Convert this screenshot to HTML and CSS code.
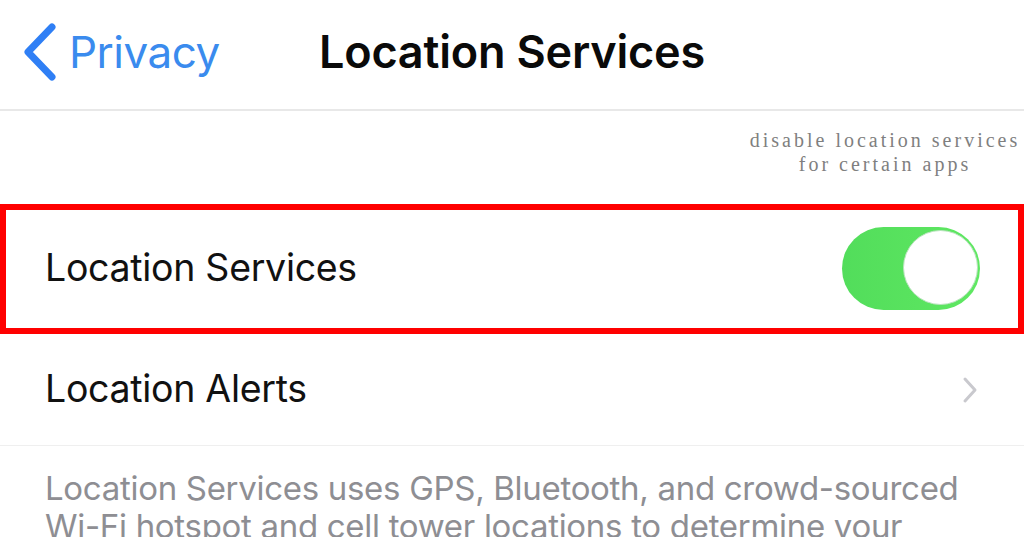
FILE: index.html
```html
<!DOCTYPE html>
<html lang="en">
<head>
<meta charset="utf-8">
<title>Location Services</title>
<link rel="stylesheet" href="styles.css">
</head>
<body>
<div class="screen">
  <header class="nav">
    <a class="back" href="#">
      <svg class="chev" width="36" height="58" viewBox="0 0 36 58"><path d="M30 4 L6 29 L30 54" fill="none" stroke="#2f7ff5" stroke-width="7" stroke-linecap="round" stroke-linejoin="round"/></svg>
      <span class="back-label">Privacy</span>
    </a>
    <h1 class="title">Location Services</h1>
    <div class="spacer"></div>
  </header>
  <div class="note">
    <p class="note-text">disable location services<br>for certain apps</p>
  </div>
  <div class="highlight">
    <div class="row">
      <span class="row-label">Location Services</span>
      <span class="toggle"><span class="knob"></span></span>
    </div>
  </div>
  <div class="row row-alerts">
    <span class="row-label">Location Alerts</span>
    <svg class="disclosure" width="16" height="28" viewBox="0 0 16 28"><path d="M3 3 L13 14 L3 25" fill="none" stroke="#c9c9ce" stroke-width="3" stroke-linecap="round" stroke-linejoin="round"/></svg>
  </div>
  <p class="footer">Location Services uses GPS, Bluetooth, and crowd-sourced Wi-Fi hotspot and cell tower locations to determine your approximate location.</p>
</div>
</body>
</html>
```
FILE: styles.css
```css
html, body {
  margin: 0;
  padding: 0;
  background: #ffffff;
}
.screen {
  width: 1024px;
  height: 537px;
  overflow: hidden;
  font-family: Inter, "Noto Sans", sans-serif;
}
.nav {
  height: 111px;
  box-sizing: border-box;
  border-bottom: 2px solid #e8e8e8;
  display: grid;
  grid-template-columns: 1fr auto 1fr;
  align-items: center;
}
.back {
  display: flex;
  align-items: center;
  text-decoration: none;
  padding-left: 22px;
  gap: 11px;
  margin-top: -6px;
}
.chev { display: block; }
.back-label {
  color: #3a8bee;
  font-size: 44px;
  font-weight: 400;
  letter-spacing: -0.5px;
}
.title {
  margin: -6px 0 0 0;
  font-size: 45px;
  font-weight: 600;
  color: #0a0a0a;
  letter-spacing: -0.2px;
}
.note {
  height: 93px;
  display: flex;
  justify-content: flex-end;
}
.note-text {
  margin: 17px 0 0 0;
  width: 278px;
  padding-right: 0;
  text-align: center;
  white-space: nowrap;
  font-family: "Liberation Serif", "DejaVu Serif", serif;
  font-size: 20px;
  line-height: 24px;
  letter-spacing: 3px;
  color: #7f7f7f;
}
.highlight {
  border: 6px solid #ff0000;
  height: 130px;
  box-sizing: border-box;
}
.row {
  height: 100%;
  display: flex;
  align-items: center;
  justify-content: space-between;
  padding: 0 38px 0 39px;
  box-sizing: border-box;
}
.row-label {
  font-size: 37.5px;
  color: #111111;
  letter-spacing: -0.3px;
  margin-top: -3px;
}
.toggle {
  width: 138px;
  height: 83px;
  border-radius: 42px;
  background: linear-gradient(90deg, #52dd5b, #5fe862);
  position: relative;
  margin-top: -2px;
}
.knob {
  position: absolute;
  right: 2px;
  top: 3px;
  width: 75px;
  height: 75px;
  border-radius: 50%;
  background: #ffffff;
  border: 1px solid #b9e3bd;
  box-sizing: border-box;
}
.row-alerts {
  height: 112px;
  border-bottom: 1px solid #efefef;
  padding-left: 45px;
  padding-right: 46px;
}
.disclosure { display: block; }
.footer {
  margin: 0;
  padding: 23px 40px 0 45px;
  font-size: 33px;
  line-height: 38px;
  color: #8e8e93;
  letter-spacing: -0.3px;
}
```
